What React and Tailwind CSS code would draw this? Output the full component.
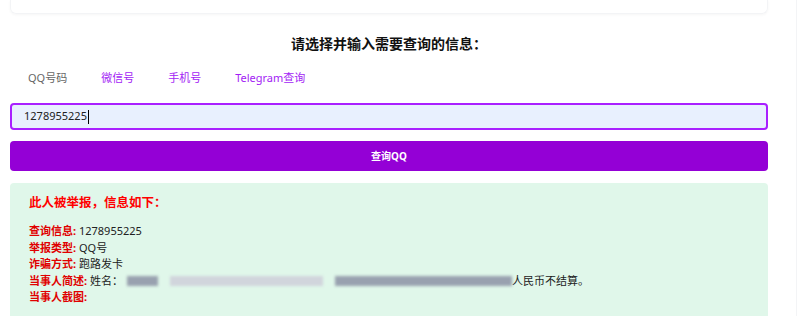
import React from 'react';

const font = { fontFamily: '"Noto Sans", "Noto Sans CJK SC", sans-serif' };

function Blur({ w, tone = 'bg-gray-400' }) {
  return <span className={`inline-block h-[10px] align-middle blur-[1.5px] ${tone}`} style={{ width: w }} />;
}

export default function App() {
  const tabs = ['QQ号码', '微信号', '手机号', 'Telegram查询'];
  return (
    <div className="w-[800px] h-[316px] overflow-hidden bg-white text-[#222]" style={font}>
      <div className="w-[797px] border-r border-gray-100 h-full">
        <div className="w-[758px] ml-[10px]">
          <div className="h-[14px] rounded-b-md border border-t-0 border-gray-100 shadow-[0_1px_3px_rgba(0,0,0,0.04)]" />

          <h2 className="mt-[20px] text-center text-[14px] font-bold leading-[20px] text-[#111]">请选择并输入需要查询的信息：</h2>

          <div className="mt-[16px] flex items-center pl-[18px] text-[11px] leading-[16px]">
            {tabs.map((t, i) => (
              <span key={t} className={`mr-[34px] ${i === 0 ? 'text-[#666]' : 'text-[#a31cf5]'}`}>{t}</span>
            ))}
          </div>

          <div className="mt-[17px] h-[27px] rounded-[4px] border-2 border-[#a920ff] bg-[#e8f0fe] flex items-center pl-[12px] text-[11px]">
            1278955225<span className="w-px h-[14px] bg-black ml-px" />
          </div>

          <button className="mt-[11px] w-full h-[30px] rounded-[4px] bg-[#9400d6] text-white text-[10px] font-bold">查询QQ</button>

          <div className="mt-[12px] h-[140px] rounded-[4px] bg-[#e0f7ea] pl-[19px] pt-[10px]">
            <div className="text-[12.5px] font-bold text-[#ff0000] leading-[20px]">此人被举报，信息如下：</div>
            <div className="mt-[10px] text-[11px] leading-[16.5px]">
              <div><b className="text-[#e00000]">查询信息:</b> 1278955225</div>
              <div><b className="text-[#e00000]">举报类型:</b> QQ号</div>
              <div><b className="text-[#e00000]">诈骗方式:</b> 跑路发卡</div>
              <div className="flex items-center whitespace-nowrap">
                <b className="text-[#e00000]">当事人简述:</b>&nbsp;姓名：
                <span className="w-[4px]" />
                <Blur w={31} tone="bg-gray-400" />
                <span className="w-[12px]" />
                <Blur w={153} tone="bg-gray-300" />
                <span className="w-[12px]" />
                <Blur w={177} tone="bg-gray-400" />
                <span>人民币不结算。</span>
              </div>
              <div><b className="text-[#e00000]">当事人截图:</b></div>
            </div>
          </div>
        </div>
      </div>
    </div>
  );
}
